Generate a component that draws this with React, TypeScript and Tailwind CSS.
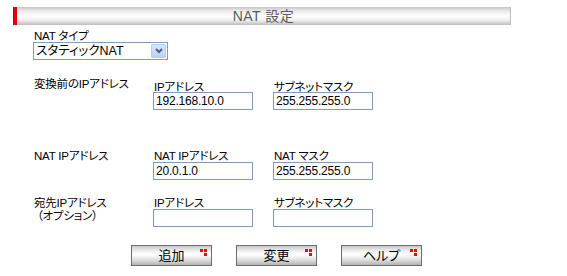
import React from 'react';

const font = "font-['Liberation_Sans','Noto_Sans_CJK_JP',sans-serif] [font-feature-settings:'palt']";

const RedDots = () => (
  <svg width="7" height="7" viewBox="0 0 7 7" className="absolute right-[4px] top-[3px]">
    <rect x="0" y="0" width="3" height="3" fill="#ff0000" />
    <rect x="4" y="0" width="3" height="3" fill="#ff0000" />
    <rect x="4" y="4" width="3" height="3" fill="#ff0000" />
  </svg>
);

const GrayButton = ({ label }: { label: string }) => (
  <button className="relative h-[21px] w-[81px] border border-[#6b6b6b] bg-[linear-gradient(to_bottom,#c8c8c8_0%,#f4f4f4_30%,#ffffff_45%,#e2e2e2_70%,#b4b4b4_100%)] text-[13px] leading-[19px] text-black">
    {label}
    <RedDots />
  </button>
);

const Field = ({ label, value, top }: { label: string; value: string; top: string }) => (
  <div className={`flex flex-col ${top}`}>
    <span className="h-[12px] pl-[1px] text-[11.5px] leading-[14px] tracking-[-0.2px]">{label}</span>
    <div className="h-[18px] w-[100px] border border-[#7f9db9] bg-white pl-[2px] text-[12px] leading-[16px]">
      {value}
    </div>
  </div>
);

export default function App() {
  return (
    <div className={`${font} h-[276px] w-[567px] overflow-hidden bg-white text-black`}>
      {/* title bar */}
      <div className="ml-[13px] mt-[7px] flex h-[18px] w-[498px] border-r border-[#bdbdbd] bg-[linear-gradient(to_bottom,#c4c4c4_0%,#e8e8e8_20%,#ffffff_50%,#ededed_75%,#bcbcbc_100%)]">
        <div className="w-[1px] bg-[#7a2020]" />
        <div className="w-[3px] bg-[#e60000]" />
        <div className="flex-1 text-center text-[14px] leading-[18px] tracking-[0.5px] text-[#5a5a5a]">
          NAT 設定
        </div>
      </div>

      <div className="ml-[33px]">
        {/* NAT type */}
        <div className="mt-[4px] h-[12px] pl-[1px] text-[11.5px] leading-[14px] tracking-[-0.2px]">NAT タイプ</div>
        <div className="mt-[1px] flex h-[18px] w-[135px] items-center border border-[#7f9db9] bg-white">
          <span className="flex-1 pl-[2px] text-[12.5px] leading-[16px]">スタティックNAT</span>
          <span className="mr-[1px] flex h-[14px] w-[15px] items-center justify-center rounded-[1px] border border-[#b9cbf1] bg-[linear-gradient(to_bottom,#dbe6fd,#bcd0f8)]">
            <svg width="8" height="6" viewBox="0 0 8 6">
              <path d="M1 1 L4 4 L7 1" stroke="#4d6185" strokeWidth="2" fill="none" />
            </svg>
          </span>
        </div>

        {/* before translation */}
        <div className="mt-[16px] grid grid-cols-[120px_120px_120px] text-[11.5px] leading-[14px] tracking-[-0.2px]">
          <span className="h-[12px] pl-[1px] pt-[1px]">変換前のIPアドレス</span>
          <Field label="IPアドレス" value="192.168.10.0" top="mt-[4px]" />
          <Field label="サブネットマスク" value="255.255.255.0" top="mt-[4px]" />
        </div>

        {/* NAT IP */}
        <div className="mt-[39px] grid grid-cols-[120px_120px_120px] text-[11.5px] leading-[14px] tracking-[-0.2px]">
          <span className="h-[12px] pl-[1px]">NAT IPアドレス</span>
          <Field label="NAT IPアドレス" value="20.0.1.0" top="[&>div]:mt-[1px]" />
          <Field label="NAT マスク" value="255.255.255.0" top="[&>div]:mt-[1px]" />
        </div>

        {/* destination */}
        <div className="mt-[16px] grid grid-cols-[120px_120px_120px] text-[11.5px] leading-[14px] tracking-[-0.2px]">
          <div className="flex flex-col pl-[1px]">
            <span className="h-[12px]">宛先IPアドレス</span>
            <span className="mt-[1px] h-[12px] pl-[3px]">（オプション）</span>
          </div>
          <Field label="IPアドレス" value="" top="[&>div]:mt-[1px]" />
          <Field label="サブネットマスク" value="" top="[&>div]:mt-[1px]" />
        </div>
      </div>

      {/* buttons */}
      <div className="ml-[131px] mt-[18px] flex gap-[24px]">
        <GrayButton label="追加" />
        <GrayButton label="変更" />
        <GrayButton label="ヘルプ" />
      </div>
    </div>
  );
}
